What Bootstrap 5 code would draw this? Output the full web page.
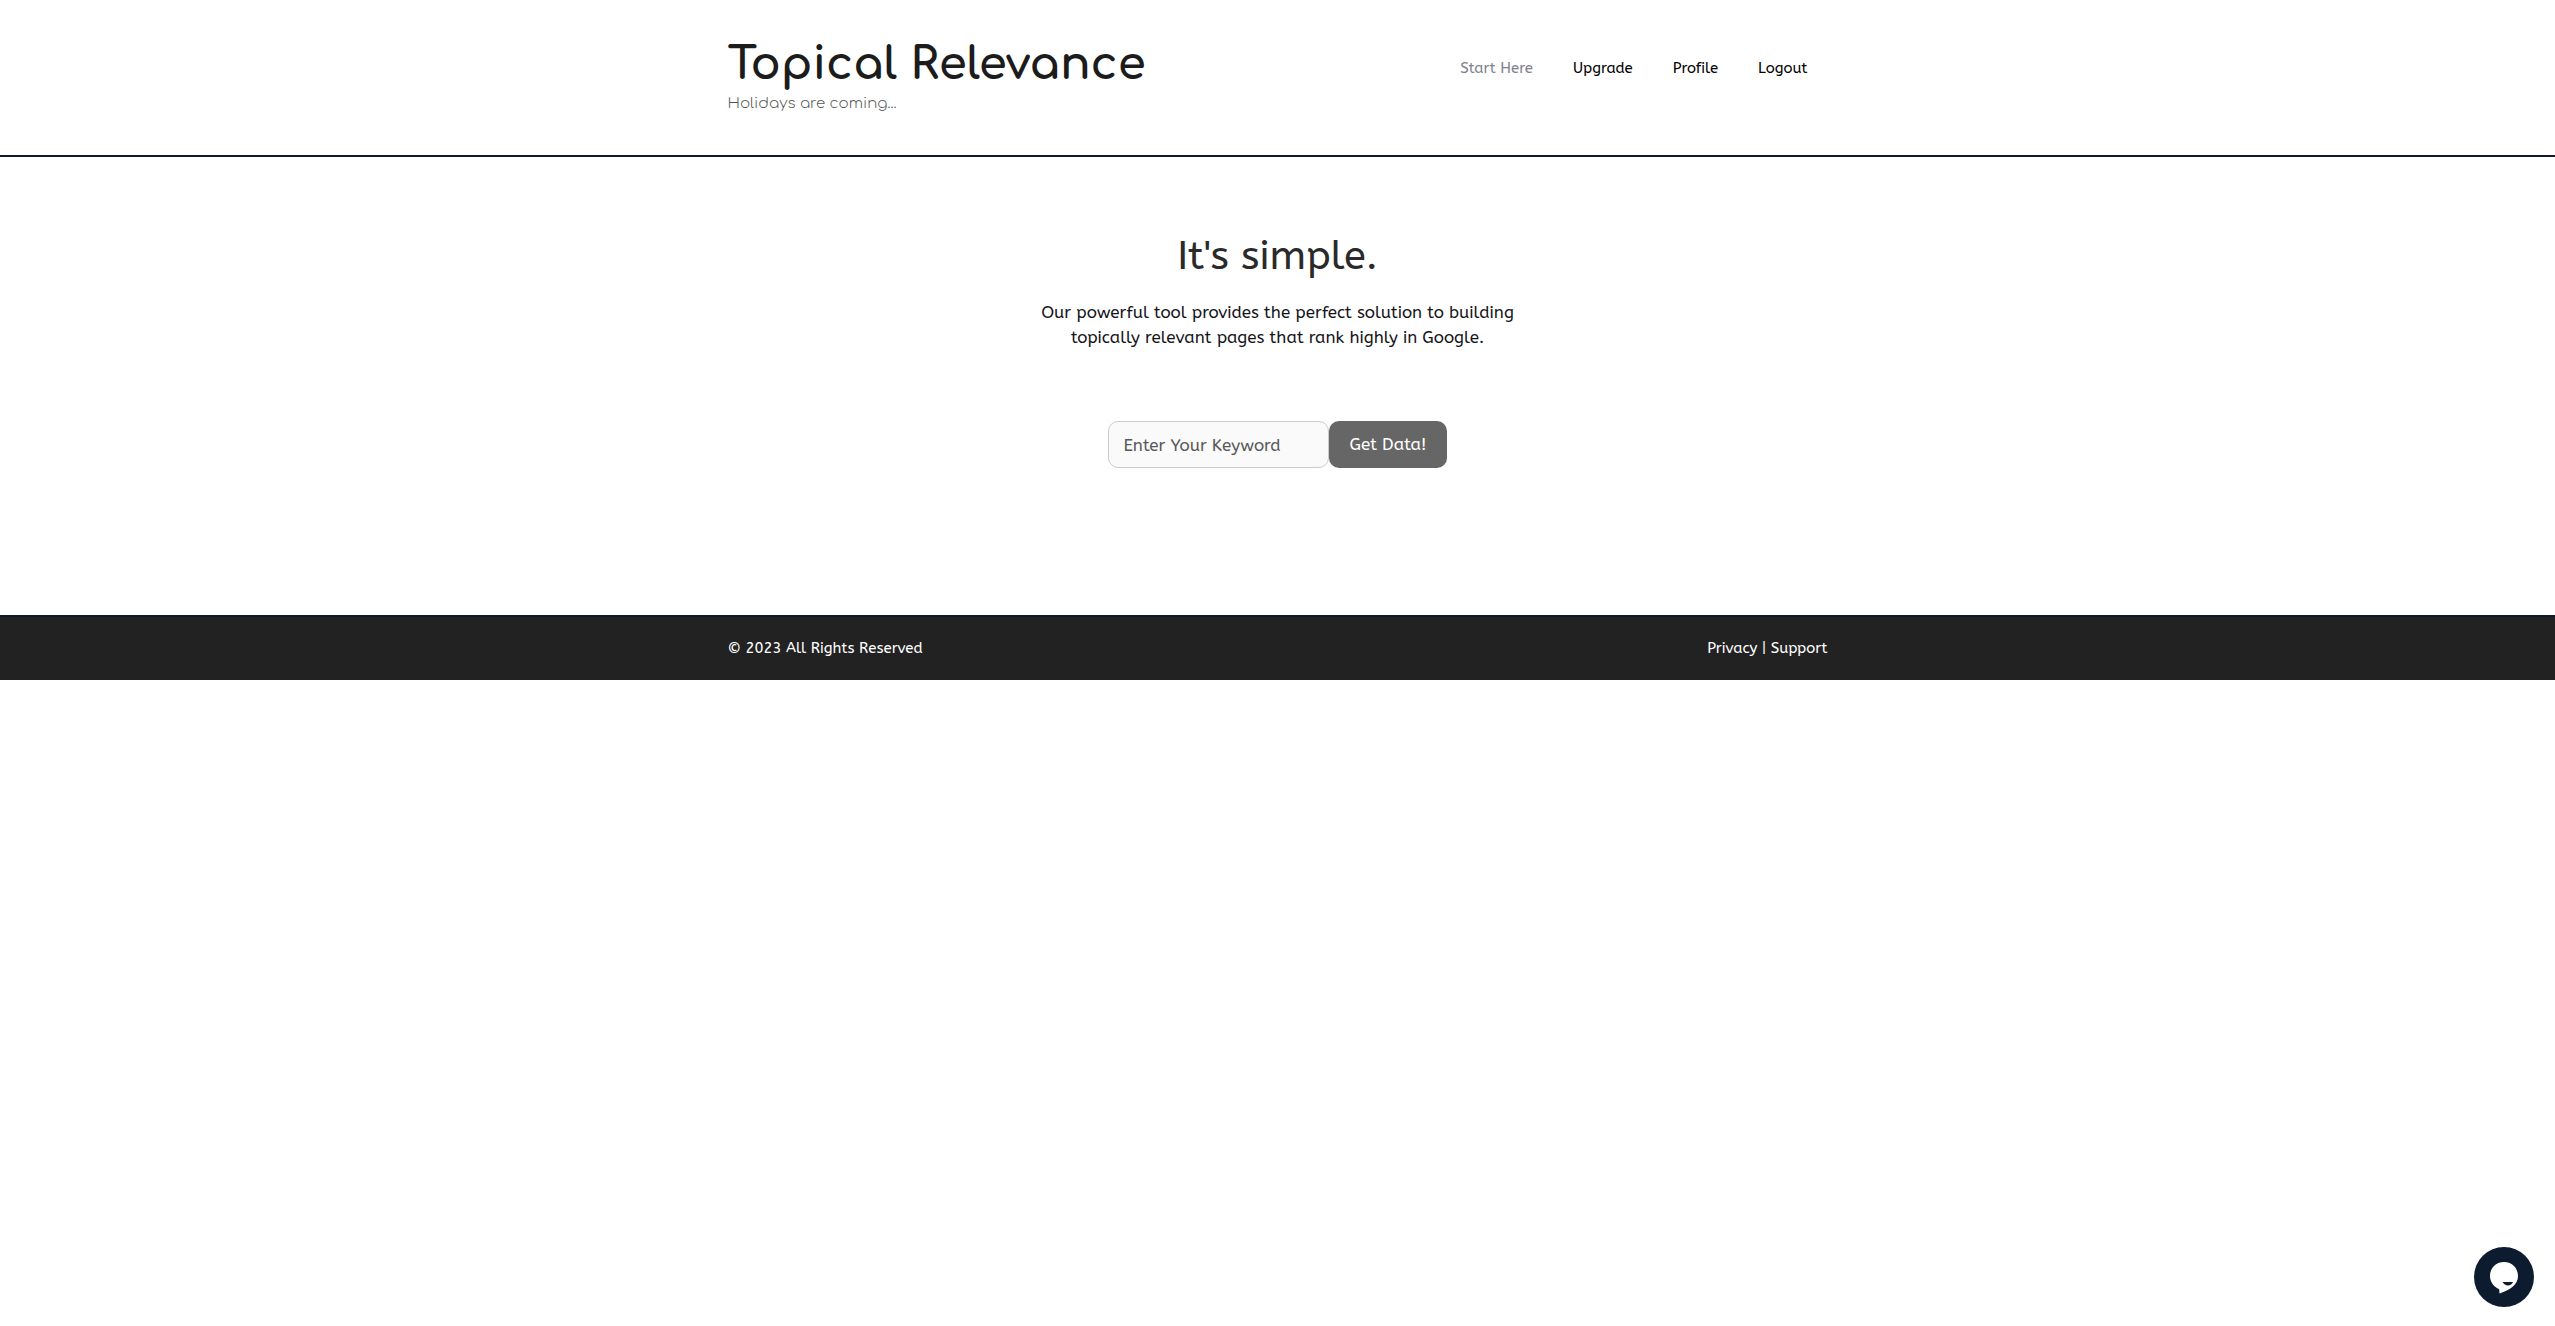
<!DOCTYPE html>
<html lang="en">
<head>
<meta charset="utf-8">
<meta name="viewport" content="width=device-width, initial-scale=1">
<title>Topical Relevance</title>
<link rel="stylesheet" href="https://cdn.jsdelivr.net/npm/bootstrap@5.3.0/dist/css/bootstrap.min.css">
<style>
  body { font-family: ABeeZee, "Noto Sans", sans-serif; font-size: 17px; line-height: 25px; color: #15151b; background: #fff; }
  a { text-decoration: none; }
  .page-wrap { max-width: 1100px; }
  .site-header { border-bottom: 2px solid #0d1b2e; padding: 38px 0 40px; }
  .site-title { font-family: Comfortaa, Lato, sans-serif; font-size: 45px; font-weight: 700; line-height: 54px; }
  .site-title a { color: #1c1c1c; }
  .tagline { font-family: Comfortaa, Lato, sans-serif; font-size: 15px; line-height: 23px; font-weight: 300; color: #555; }
  .site-nav { font-size: 15px; line-height: 60px; gap: 40px; padding-right: 20px; }
  .site-nav .nav-link { color: #000; padding: 0; }
  .site-nav .nav-link.active { color: #81818f; }
  .hero { padding: 73px 0 147px; }
  .hero-title { font-size: 40px; line-height: 52px; font-weight: 400; color: #2a2a2a; margin-bottom: 18px; }
  .intro { max-width: 500px; margin-bottom: 71px; }
  .keyword { width: 221px; height: 47px; font-size: 17px; padding: 10px 15px; background: #fafafa; border: 1px solid #ccc; border-radius: 10px; }
  .keyword::placeholder { color: #595959; }
  .get-data { height: 47px; font-size: 17px; padding: 10px 21px; line-height: 27px; background: #666; color: #fff; border: 0; border-radius: 10px; }
  .get-data:hover { background: #3f3f3f; color: #fff; }
  .site-footer { background: #222; border-top: 2px solid #0d1b2e; color: #fff; font-size: 15px; line-height: 23px; padding: 20px 0; }
  .site-footer a { color: #fff; }
  .chat-btn { right: 21px; bottom: 19px; width: 60px; height: 60px; background: #0d1b2e; }
</style>
</head>
<body>
<header class="site-header">
  <div class="container-fluid page-wrap px-0 d-flex flex-wrap justify-content-between align-items-start">
    <div>
      <h1 class="site-title mb-0"><a href="#">Topical Relevance</a></h1>
      <p class="tagline mb-0">Holidays are coming...</p>
    </div>
    <nav class="nav site-nav" aria-label="Primary">
      <a class="nav-link active" href="#" aria-current="page">Start Here</a>
      <a class="nav-link" href="#">Upgrade</a>
      <a class="nav-link" href="#">Profile</a>
      <a class="nav-link" href="#">Logout</a>
    </nav>
  </div>
</header>
<main class="hero text-center">
  <h2 class="hero-title">It's simple.</h2>
  <p class="intro mx-auto">Our powerful tool provides the perfect solution to building topically relevant pages that rank highly in Google.</p>
  <form class="d-flex justify-content-center">
    <input class="form-control keyword" id="keyword" type="text" placeholder="Enter Your Keyword" aria-label="Enter Your Keyword">
    <button class="btn get-data" type="button">Get Data!</button>
  </form>
</main>
<footer class="site-footer">
  <div class="container-fluid page-wrap px-0 d-flex flex-wrap justify-content-between">
    <span>© 2023 All Rights Reserved</span>
    <span><a href="#">Privacy</a> | <a href="#">Support</a></span>
  </div>
</footer>
<button class="chat-btn btn rounded-circle border-0 p-0 position-fixed" type="button" aria-label="Open chat">
  <svg class="d-block" width="60" height="60" viewBox="0 0 60 60" aria-hidden="true">
    <path fill="#fff" d="M30 15c8 0 14 6 14 14 0 9-8 14-18.500 17.500l-.3-4.300C20 40 16 35 16 29c0-8 6-14 14-14z"/>
    <path fill="#0d1b2e" d="M28.700 35h10.300c-1.500 4.500-8.500 4.500-10.300 0z"/>
  </svg>
</button>
<script src="https://cdn.jsdelivr.net/npm/bootstrap@5.3.0/dist/js/bootstrap.bundle.min.js"></script>
</body>
</html>
